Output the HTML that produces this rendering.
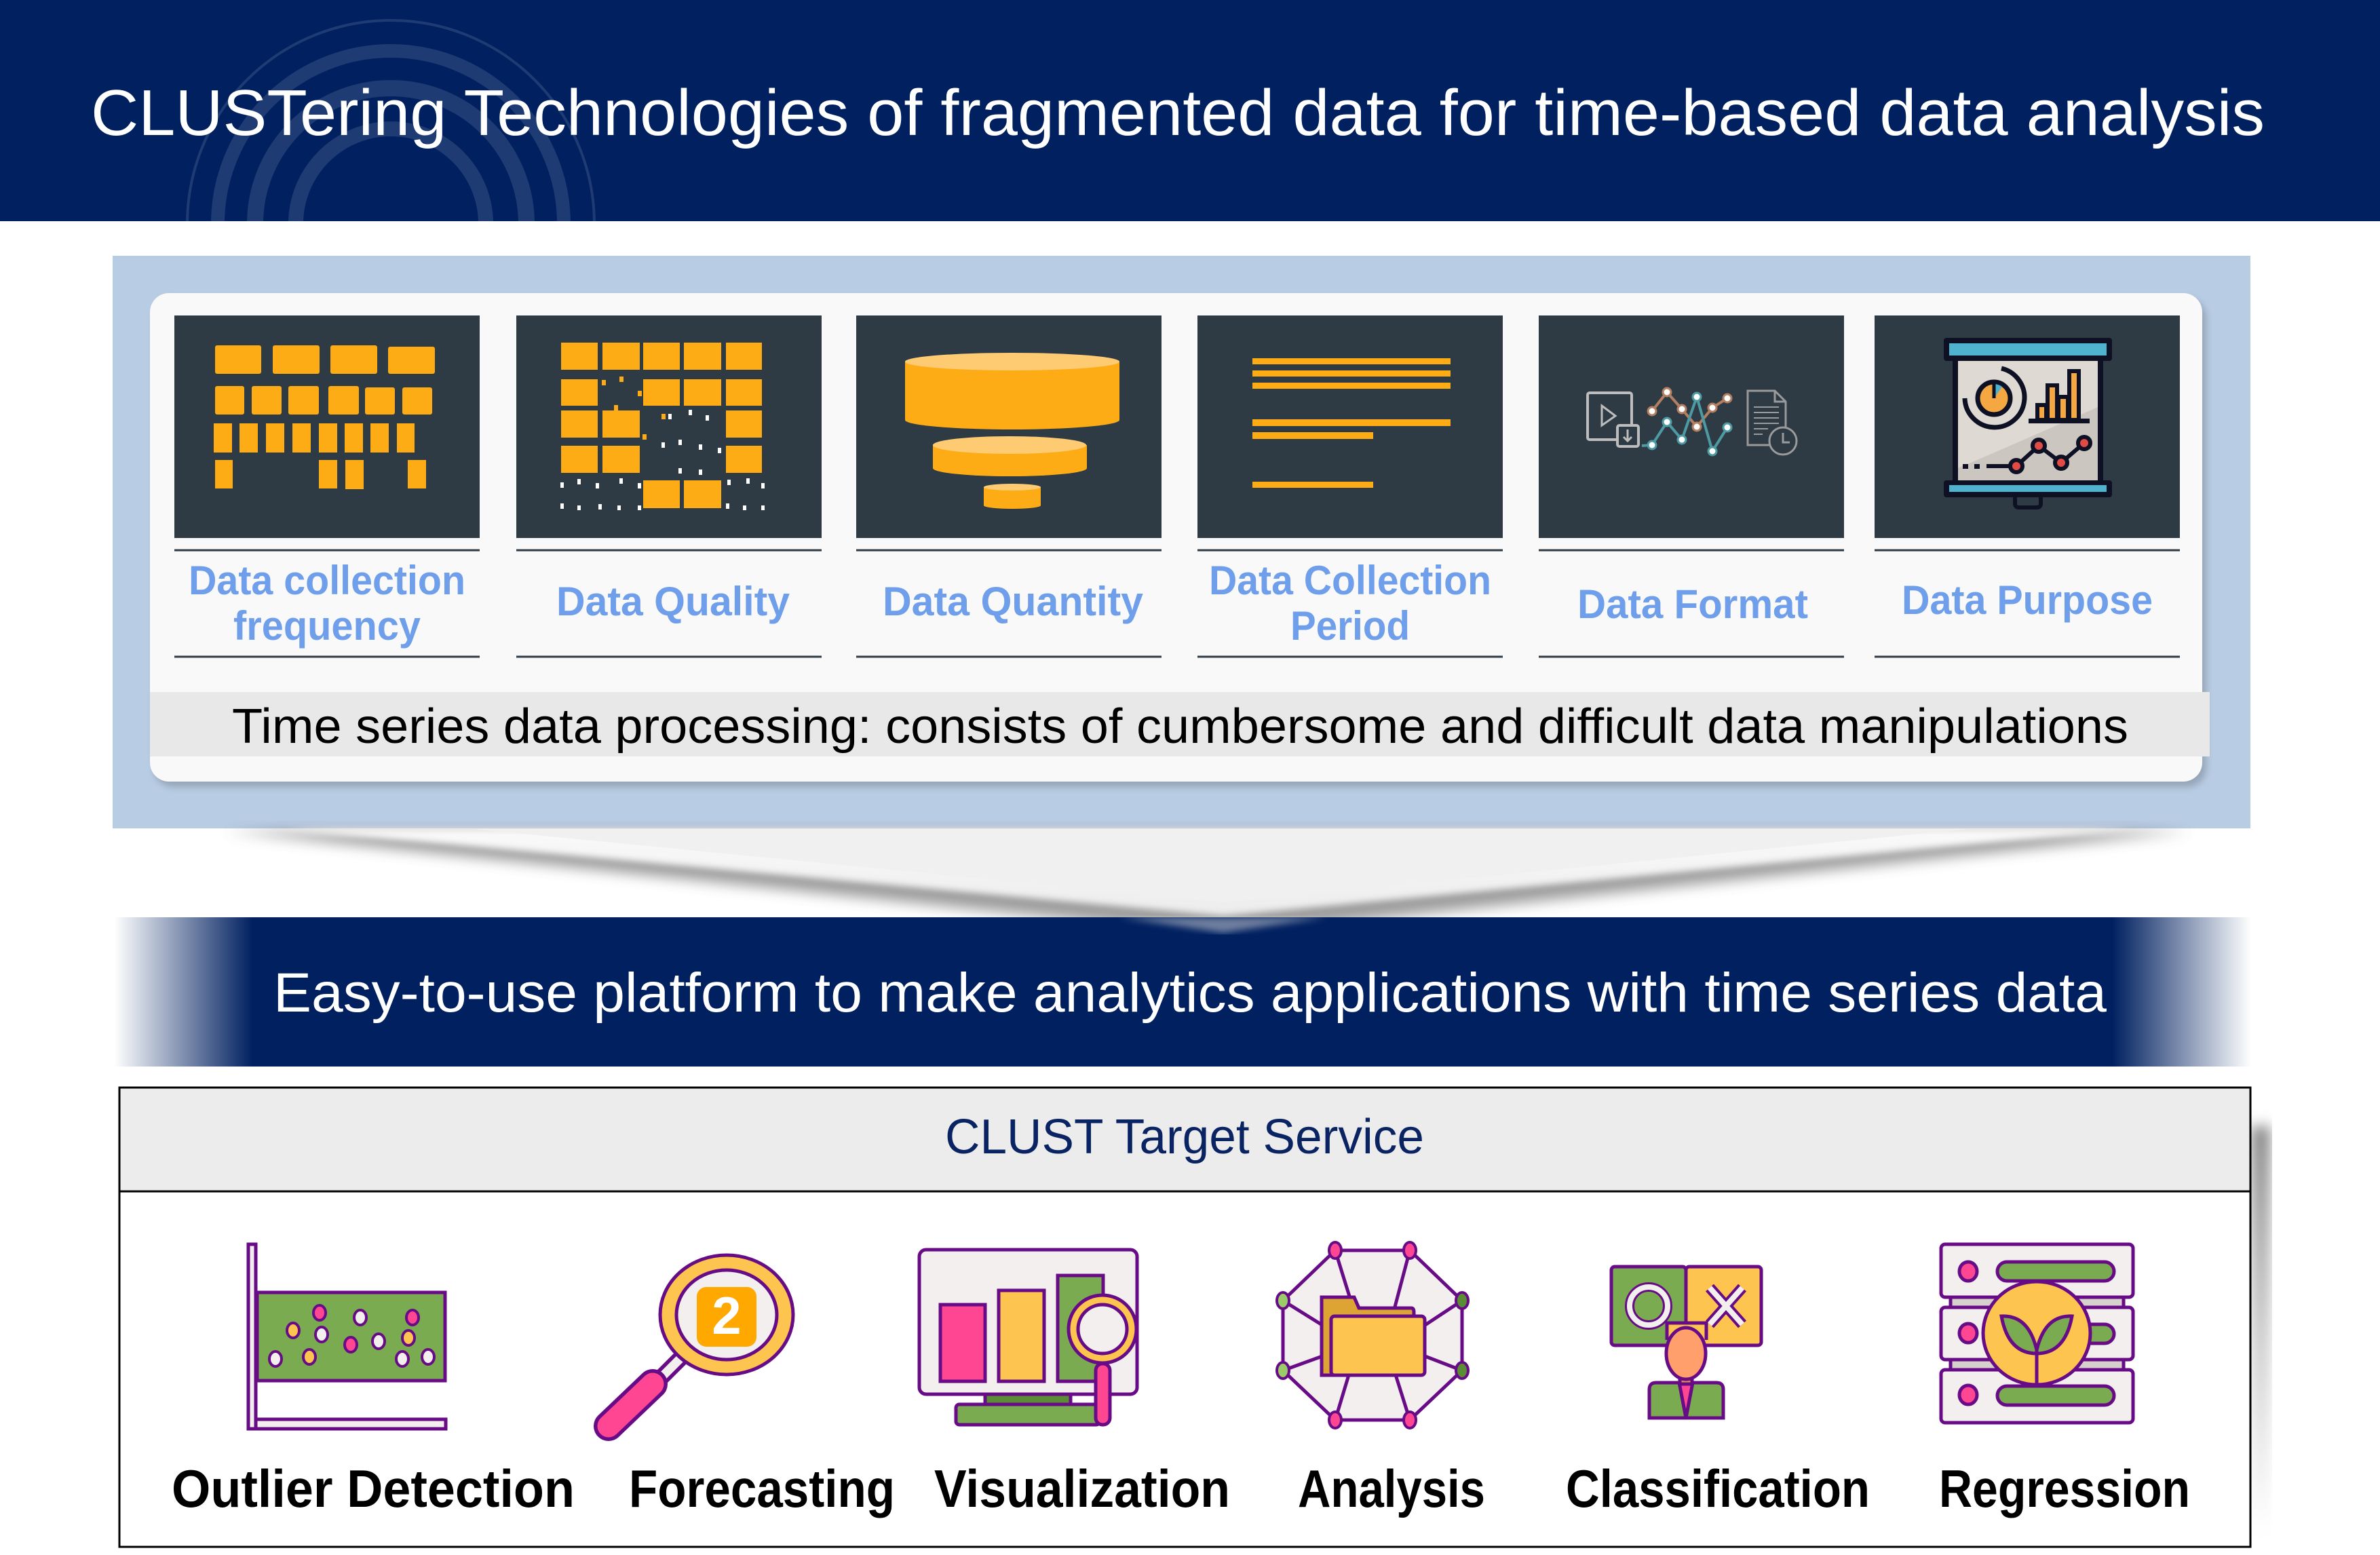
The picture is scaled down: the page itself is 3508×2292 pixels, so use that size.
<!DOCTYPE html>
<html><head><meta charset="utf-8"><style>html,body{margin:0;padding:0;background:#fff}svg{display:block}</style></head>
<body>
<svg width="3508" height="2292" viewBox="0 0 3508 2292" xmlns="http://www.w3.org/2000/svg" font-family="Liberation Sans, sans-serif">
<defs>
<linearGradient id="band" x1="0" x2="1" y1="0" y2="0">
<stop offset="0" stop-color="#002060" stop-opacity="0"/>
<stop offset="0.065" stop-color="#002060" stop-opacity="1"/>
<stop offset="0.935" stop-color="#002060" stop-opacity="1"/>
<stop offset="1" stop-color="#002060" stop-opacity="0"/>
</linearGradient>
<filter id="blur8"><feGaussianBlur stdDeviation="10"/></filter>
<filter id="blur4"><feGaussianBlur stdDeviation="5"/></filter>
<linearGradient id="vfill" x1="0" x2="0" y1="0" y2="1"><stop offset="0" stop-color="#fafafa"/><stop offset="1" stop-color="#ececec"/></linearGradient>
<linearGradient id="shR" x1="0" x2="0" y1="0" y2="1"><stop offset="0" stop-color="#777" stop-opacity="0.9"/><stop offset="1" stop-color="#999" stop-opacity="0"/></linearGradient>
</defs>

<!-- header -->
<rect x="0" y="0" width="3508" height="326" fill="#002060"/>
<g fill="none" stroke="#ffffff" stroke-opacity="0.12">
<circle cx="576" cy="330" r="300" stroke-width="4"/>
<circle cx="576" cy="330" r="255" stroke-width="20"/>
<circle cx="576" cy="330" r="200" stroke-width="24"/>
<circle cx="576" cy="330" r="140" stroke-width="22"/>
</g>
<text x="134" y="199" font-size="96" fill="#fff" textLength="3204" lengthAdjust="spacingAndGlyphs">CLUSTering Technologies of fragmented data for time-based data analysis</text>

<!-- top blue panel -->
<rect x="166" y="377" width="3151" height="844" fill="#b8cce4"/>
<rect x="227" y="440" width="3025" height="720" rx="28" fill="#7f8c99" opacity="0.6" filter="url(#blur4)"/>
<rect x="221" y="432" width="3025" height="720" rx="28" fill="#f9f9f9"/>
<rect x="221" y="1020" width="3036" height="95" fill="#e8e8e8"/>
<text x="342" y="1095" font-size="72" fill="#000" textLength="2795" lengthAdjust="spacingAndGlyphs">Time series data processing: consists of cumbersome and difficult data manipulations</text>

<!-- tiles -->
<g fill="#2e3b44">
<rect x="257" y="465" width="450" height="328"/>
<rect x="761" y="465" width="450" height="328"/>
<rect x="1262" y="465" width="450" height="328"/>
<rect x="1765" y="465" width="450" height="328"/>
<rect x="2268" y="465" width="450" height="328"/>
<rect x="2763" y="465" width="450" height="328"/>
</g>
<g stroke="#2e3b44" stroke-width="3">
<line x1="257" y1="811" x2="707" y2="811"/><line x1="257" y1="968" x2="707" y2="968"/>
<line x1="761" y1="811" x2="1211" y2="811"/><line x1="761" y1="968" x2="1211" y2="968"/>
<line x1="1262" y1="811" x2="1712" y2="811"/><line x1="1262" y1="968" x2="1712" y2="968"/>
<line x1="1765" y1="811" x2="2215" y2="811"/><line x1="1765" y1="968" x2="2215" y2="968"/>
<line x1="2268" y1="811" x2="2718" y2="811"/><line x1="2268" y1="968" x2="2718" y2="968"/>
<line x1="2763" y1="811" x2="3213" y2="811"/><line x1="2763" y1="968" x2="3213" y2="968"/>
</g>
<g fill="#6f9eea" font-weight="bold" font-size="60" text-anchor="middle">
<text x="482" y="876" textLength="408" lengthAdjust="spacingAndGlyphs">Data collection</text>
<text x="482" y="943" textLength="276" lengthAdjust="spacingAndGlyphs">frequency</text>
<text x="992" y="907" textLength="344" lengthAdjust="spacingAndGlyphs">Data Quality</text>
<text x="1493" y="907" textLength="384" lengthAdjust="spacingAndGlyphs">Data Quantity</text>
<text x="1990" y="876" textLength="416" lengthAdjust="spacingAndGlyphs">Data Collection</text>
<text x="1990" y="943" textLength="176" lengthAdjust="spacingAndGlyphs">Period</text>
<text x="2495" y="911" textLength="340" lengthAdjust="spacingAndGlyphs">Data Format</text>
<text x="2988" y="905" textLength="370" lengthAdjust="spacingAndGlyphs">Data Purpose</text>
</g>

<!-- tile1 blocks -->
<g fill="#fdac16">
<rect x="317" y="509" width="68" height="42" rx="3"/><rect x="402" y="509" width="69" height="42" rx="3"/><rect x="487" y="509" width="69" height="42" rx="3"/><rect x="572" y="511" width="69" height="40" rx="3"/>
<rect x="317" y="569" width="43" height="42" rx="3"/><rect x="371" y="569" width="44" height="42" rx="3"/><rect x="425" y="569" width="45" height="42" rx="3"/><rect x="484" y="569" width="45" height="42" rx="3"/><rect x="538" y="571" width="44" height="40" rx="3"/><rect x="593" y="571" width="44" height="40" rx="3"/>
<rect x="315" y="624" width="27" height="43"/><rect x="353" y="624" width="27" height="43"/><rect x="392" y="624" width="27" height="43"/><rect x="431" y="624" width="27" height="43"/><rect x="470" y="624" width="27" height="43"/><rect x="508" y="624" width="27" height="43"/><rect x="546" y="624" width="27" height="43"/><rect x="585" y="624" width="26" height="43"/>
<rect x="317" y="678" width="26" height="42"/><rect x="470" y="678" width="27" height="42"/><rect x="509" y="678" width="27" height="43"/><rect x="601" y="678" width="27" height="42"/>
</g>
<!-- tile2 grid -->
<g fill="#fdac16">
<rect x="827" y="505" width="54" height="40"/><rect x="888" y="505" width="55" height="40"/><rect x="948" y="505" width="54" height="40"/><rect x="1008" y="505" width="55" height="40"/><rect x="1070" y="505" width="53" height="40"/>
<rect x="827" y="559" width="54" height="39"/><rect x="948" y="559" width="54" height="39"/><rect x="1008" y="559" width="55" height="39"/><rect x="1070" y="559" width="53" height="39"/>
<rect x="827" y="605" width="54" height="40"/><rect x="888" y="605" width="55" height="40"/><rect x="1070" y="605" width="53" height="40"/>
<rect x="827" y="657" width="54" height="40"/><rect x="888" y="657" width="55" height="40"/><rect x="1070" y="657" width="53" height="40"/>
<rect x="948" y="708" width="54" height="41"/><rect x="1008" y="708" width="55" height="41"/>
<rect x="887" y="560" width="6" height="8"/><rect x="913" y="555" width="6" height="8"/><rect x="940" y="576" width="6" height="8"/><rect x="905" y="597" width="6" height="8"/><rect x="975" y="610" width="6" height="8"/><rect x="947" y="640" width="6" height="8"/>
</g>
<g fill="#fff">
<rect x="826" y="711" width="5" height="8"/><rect x="851" y="706" width="5" height="8"/><rect x="878" y="712" width="5" height="8"/><rect x="913" y="705" width="5" height="8"/><rect x="940" y="712" width="5" height="8"/><rect x="1072" y="707" width="5" height="8"/><rect x="1100" y="705" width="5" height="8"/><rect x="1122" y="712" width="5" height="8"/>
<rect x="826" y="742" width="5" height="8"/><rect x="851" y="745" width="5" height="7"/><rect x="882" y="743" width="5" height="8"/><rect x="910" y="745" width="5" height="7"/><rect x="940" y="745" width="5" height="7"/><rect x="1070" y="742" width="5" height="8"/><rect x="1095" y="745" width="5" height="7"/><rect x="1122" y="745" width="5" height="7"/>
<rect x="985" y="610" width="5" height="8"/><rect x="1015" y="604" width="5" height="8"/><rect x="1040" y="612" width="5" height="8"/><rect x="975" y="652" width="5" height="8"/><rect x="1000" y="648" width="5" height="8"/><rect x="1030" y="655" width="5" height="8"/><rect x="1058" y="660" width="5" height="8"/><rect x="1000" y="690" width="5" height="8"/><rect x="1030" y="692" width="5" height="8"/>
</g>
<!-- tile3 cylinders -->
<g>
<path d="M1334 533 V619 A158 14 0 0 0 1650 619 V533 Z" fill="#fdac16"/>
<ellipse cx="1492" cy="533" rx="158" ry="13" fill="#fecb72"/>
<path d="M1375 656 V690 A113 12 0 0 0 1602 690 V656 Z" fill="#fdac16"/>
<ellipse cx="1488" cy="656" rx="113" ry="13" fill="#fecb72"/>
<path d="M1450 718 V745 A42 5 0 0 0 1534 745 V718 Z" fill="#fdac16"/>
<ellipse cx="1492" cy="718" rx="42" ry="5" fill="#fecb72"/>
</g>
<!-- tile4 lines -->
<g fill="#fdac16">
<rect x="1846" y="528" width="292" height="9"/><rect x="1846" y="546" width="292" height="9"/><rect x="1846" y="564" width="292" height="9"/>
<rect x="1846" y="618" width="292" height="10"/><rect x="1846" y="637" width="178" height="10"/><rect x="1846" y="710" width="178" height="9"/>
</g>
<!-- tile5 data format -->
<g fill="none" stroke="#bdbdbd" stroke-width="4">
<rect x="2340" y="579" width="65" height="69" rx="3"/>
<rect x="2384" y="627" width="31" height="31" rx="3" fill="#2e3b44"/>
<path d="M2361 598 L2381 613 L2361 627 Z" stroke-width="3"/>
<path d="M2399 633 V650 M2393 644 L2399 650 L2405 644" stroke-width="3"/>
<path d="M2576 576 H2616 L2632 592 V656 H2576 Z" stroke="#9a9a9a" stroke-width="3"/>
<path d="M2616 576 V592 H2632" stroke="#9a9a9a" stroke-width="3"/>
<path d="M2585 600 H2622 M2585 608 H2622 M2585 616 H2622 M2585 624 H2622 M2585 632 H2606 M2585 640 H2598" stroke="#9a9a9a" stroke-width="2"/>
<circle cx="2628" cy="650" r="20" fill="#2e3b44" stroke="#9a9a9a" stroke-width="3"/>
<path d="M2628 638 V652 H2638" stroke="#9a9a9a" stroke-width="3"/>
</g>
<polyline points="2435,606 2457,578 2479,603 2501,629 2524,601 2546,587" fill="none" stroke="#b47e61" stroke-width="4"/>
<polyline points="2420,657 2435,656 2457,622 2479,648 2501,585 2524,665 2546,630" fill="none" stroke="#4d9aa3" stroke-width="4"/>
<g fill="#fff" stroke-width="3">
<g stroke="#b47e61"><circle cx="2435" cy="606" r="6"/><circle cx="2457" cy="578" r="6"/><circle cx="2479" cy="603" r="6"/><circle cx="2501" cy="629" r="6"/><circle cx="2524" cy="601" r="6"/><circle cx="2546" cy="587" r="6"/></g>
<g stroke="#4d9aa3"><circle cx="2435" cy="656" r="6"/><circle cx="2457" cy="622" r="6"/><circle cx="2479" cy="648" r="6"/><circle cx="2501" cy="585" r="6"/><circle cx="2524" cy="665" r="6"/><circle cx="2546" cy="630" r="6"/></g>
</g>
<!-- tile6 presentation -->
<g>
<rect x="2878" y="530" width="222" height="182" fill="#0e1024"/>
<rect x="2886" y="532" width="206" height="176" fill="#ded9d2"/>
<path d="M2886 690 Q2980 650 3092 600 V708 H2886 Z" fill="#cbc6bf"/>
<rect x="2865" y="498" width="248" height="34" rx="4" fill="#0e1024"/>
<rect x="2873" y="506" width="232" height="18" fill="#4fb3cf"/>
<rect x="2865" y="708" width="248" height="25" rx="4" fill="#0e1024"/>
<rect x="2873" y="715" width="232" height="10" fill="#4fb3cf"/>
<path d="M2970 733 V742 Q2970 748 2976 748 H3002 Q3008 748 3008 742 V733" fill="none" stroke="#0e1024" stroke-width="6"/>
<circle cx="2939" cy="587" r="24" fill="#f5a742" stroke="#0e1024" stroke-width="7"/>
<path d="M2939 587 L2939 566 A21 21 0 0 1 2951 570 Z" fill="#4fb3cf"/>
<line x1="2939" y1="587" x2="2939" y2="565" stroke="#0e1024" stroke-width="5"/>
<path d="M2950 543 A44 44 0 1 1 2896 587" fill="none" stroke="#0e1024" stroke-width="7"/>
<rect x="2990" y="617" width="90" height="7" fill="#0e1024"/>
<g fill="#f5a742" stroke="#0e1024" stroke-width="6"><rect x="3003" y="597" width="13" height="22"/><rect x="3018" y="568" width="14" height="51"/><rect x="3034" y="585" width="14" height="34"/><rect x="3050" y="547" width="14" height="72"/></g>
<polyline points="2928,687 2972,687 3005,657 3038,682 3072,653" fill="none" stroke="#0e1024" stroke-width="6"/>
<rect x="2893" y="684" width="8" height="7" fill="#0e1024"/><rect x="2910" y="684" width="8" height="7" fill="#0e1024"/>
<g fill="#e04b45" stroke="#0e1024" stroke-width="6"><circle cx="2972" cy="687" r="9"/><circle cx="3005" cy="657" r="9"/><circle cx="3038" cy="682" r="9"/><circle cx="3072" cy="653" r="9"/></g>
</g>

<!-- funnel V -->
<polygon points="330,1225 3230,1225 1803,1378" fill="#8a8a8a" opacity="0.85" filter="url(#blur8)"/>
<polygon points="420,1222 3140,1222 1803,1350" fill="url(#vfill)" filter="url(#blur4)"/>
<polygon points="700,1222 2900,1222 1803,1330" fill="#f0f0f0"/>

<!-- band -->
<rect x="168" y="1352" width="3150" height="220" fill="url(#band)"/>
<polygon points="1650,1352 1956,1352 1803,1375" fill="#dcdcdc" opacity="0.5" filter="url(#blur4)"/>
<text x="403" y="1491" font-size="82" fill="#fff" textLength="2702" lengthAdjust="spacingAndGlyphs">Easy-to-use platform to make analytics applications with time series data</text>

<!-- bottom box -->
<rect x="3318" y="1660" width="28" height="600" fill="url(#shR)" filter="url(#blur8)"/>
<rect x="176" y="1603" width="3141" height="677" fill="#fff" stroke="#000" stroke-width="3"/>
<rect x="177.5" y="1604.5" width="3138" height="151" fill="#ececec"/>
<line x1="176" y1="1756" x2="3317" y2="1756" stroke="#000" stroke-width="3"/>
<text x="1746" y="1700" font-size="72" fill="#0a2463" text-anchor="middle" textLength="706" lengthAdjust="spacingAndGlyphs">CLUST Target Service</text>

<g font-weight="bold" font-size="78" fill="#000" text-anchor="middle">
<text x="550" y="2221" textLength="594" lengthAdjust="spacingAndGlyphs">Outlier Detection</text>
<text x="1123" y="2221" textLength="392" lengthAdjust="spacingAndGlyphs">Forecasting</text>
<text x="1595" y="2221" textLength="436" lengthAdjust="spacingAndGlyphs">Visualization</text>
<text x="2051" y="2221" textLength="276" lengthAdjust="spacingAndGlyphs">Analysis</text>
<text x="2532" y="2221" textLength="448" lengthAdjust="spacingAndGlyphs">Classification</text>
<text x="3043" y="2221" textLength="370" lengthAdjust="spacingAndGlyphs">Regression</text>
</g>

<!-- icon: outlier -->
<g stroke="#680b86" stroke-width="5">
<rect x="366" y="1834" width="11" height="272" fill="#f3efee"/>
<rect x="377" y="2092" width="280" height="14" fill="#f3efee"/>
<rect x="379" y="1905" width="277" height="130" fill="#7bab50"/>
<g stroke-width="4">
<ellipse cx="471" cy="1935" rx="9" ry="11" fill="#fe4693"/><ellipse cx="531" cy="1942" rx="9" ry="11" fill="#f3efee"/><ellipse cx="608" cy="1942" rx="9" ry="11" fill="#fe4693"/>
<ellipse cx="432" cy="1961" rx="9" ry="11" fill="#fdc44f"/><ellipse cx="474" cy="1967" rx="9" ry="11" fill="#f3efee"/><ellipse cx="517" cy="1982" rx="9" ry="11" fill="#fe4693"/>
<ellipse cx="558" cy="1977" rx="9" ry="11" fill="#f3efee"/><ellipse cx="602" cy="1972" rx="9" ry="11" fill="#fdc44f"/><ellipse cx="406" cy="2003" rx="9" ry="11" fill="#f3efee"/>
<ellipse cx="456" cy="2000" rx="9" ry="11" fill="#fdc44f"/><ellipse cx="593" cy="2003" rx="9" ry="11" fill="#f3efee"/><ellipse cx="631" cy="2000" rx="9" ry="11" fill="#f3efee"/>
</g>
</g>
<!-- icon: forecasting -->
<g stroke="#680b86" stroke-width="5">
<line x1="1010" y1="1995" x2="965" y2="2040" stroke="#680b86" stroke-width="24"/>
<line x1="1010" y1="1995" x2="965" y2="2040" stroke="#f3efee" stroke-width="13"/>
<line x1="962" y1="2040" x2="897" y2="2102" stroke="#680b86" stroke-width="44" stroke-linecap="round"/>
<line x1="962" y1="2040" x2="897" y2="2102" stroke="#fe4693" stroke-width="33" stroke-linecap="round"/>
<ellipse cx="1071" cy="1938" rx="98" ry="88" fill="#fdc44f"/>
<ellipse cx="1071" cy="1938" rx="74" ry="66" fill="#f3efee"/>
<rect x="1027" y="1897" width="88" height="88" rx="14" fill="#fea800" stroke="none"/>
<text x="1071" y="1966" font-size="78" font-weight="bold" fill="#fff" stroke="none" text-anchor="middle">2</text>
</g>
<!-- icon: visualization -->
<g stroke="#680b86" stroke-width="5">
<rect x="1452" y="2055" width="126" height="15" fill="#5b8e34"/>
<rect x="1409" y="2070" width="212" height="30" rx="5" fill="#7bab50"/>
<rect x="1355" y="1842" width="321" height="213" rx="10" fill="#f3efee"/>
<rect x="1386" y="1923" width="66" height="113" fill="#fe4693"/>
<rect x="1472" y="1902" width="67" height="134" fill="#fdc44f"/>
<rect x="1559" y="1880" width="67" height="156" fill="#7bab50"/>
<rect x="1615" y="2010" width="21" height="90" rx="10" fill="#fe4693"/>
<circle cx="1625" cy="1959" r="50" fill="#fdc44f"/>
<circle cx="1625" cy="1959" r="36" fill="#f3efee"/>
</g>
<!-- icon: analysis -->
<g stroke="#680b86" stroke-width="5">
<polygon points="1968,1843 2078,1843 2155,1917 2155,2020 2078,2093 1968,2093 1891,2020 1891,1917" fill="#f3efee"/>
<path d="M1968,1843 L1995,1930 M2078,1843 L2055,1930 M1891,1917 L1960,1960 M2155,1917 L2090,1960 M1891,2020 L1960,1995 M2155,2020 L2090,1995 M1968,2093 L1990,2020 M2078,2093 L2055,2020" fill="none"/>
<path d="M1948 1912 H1996 L2003 1928 H2080 Q2084 1928 2084 1934 V2027 H1948 Z" fill="#dea433"/>
<rect x="1962" y="1940" width="138" height="87" rx="5" fill="#fdc44f"/>
<g stroke-width="4"><ellipse cx="1968" cy="1843" rx="9" ry="12" fill="#fe4693"/><ellipse cx="2078" cy="1843" rx="9" ry="12" fill="#fe4693"/><ellipse cx="1891" cy="1917" rx="9" ry="12" fill="#9ccb6a"/><ellipse cx="2155" cy="1917" rx="9" ry="12" fill="#5b8e34"/><ellipse cx="1891" cy="2020" rx="9" ry="12" fill="#9ccb6a"/><ellipse cx="2155" cy="2020" rx="9" ry="12" fill="#5b8e34"/><ellipse cx="1968" cy="2093" rx="9" ry="12" fill="#fe4693"/><ellipse cx="2078" cy="2093" rx="9" ry="12" fill="#fe4693"/></g>
</g>
<!-- icon: classification -->
<g stroke="#680b86" stroke-width="5">
<rect x="2375" y="1867" width="110" height="116" rx="5" fill="#7bab50"/>
<rect x="2485" y="1867" width="111" height="116" rx="5" fill="#fdc44f"/>
<ellipse cx="2430" cy="1925" rx="28" ry="28" fill="none" stroke="#680b86" stroke-width="14"/>
<ellipse cx="2430" cy="1925" rx="28" ry="28" fill="none" stroke="#f3efee" stroke-width="8"/>
<path d="M2520 1898 L2568 1952 M2568 1898 L2520 1952" stroke="#680b86" stroke-width="16"/>
<path d="M2520 1898 L2568 1952 M2568 1898 L2520 1952" stroke="#f3efee" stroke-width="8"/>
<path d="M2431 2090 V2048 Q2431 2038 2441 2038 H2530 Q2540 2038 2540 2048 V2090 Z" fill="#7bab50"/>
<path d="M2475 2038 L2485 2090 L2495 2038" fill="#fe4693"/>
<rect x="2476" y="2025" width="18" height="15" fill="#e08a4a"/>
<path d="M2457 1975 V1950 H2515 V1975" fill="#fdc44f"/>
<ellipse cx="2485" cy="1995" rx="29" ry="38" fill="#ffa06c"/>
</g>
<!-- icon: regression -->
<g stroke="#680b86" stroke-width="5">
<rect x="2875" y="1912" width="255" height="16" fill="#d6d1cd"/>
<rect x="2875" y="2003" width="255" height="16" fill="#d6d1cd"/>
<rect x="2861" y="1834" width="283" height="78" rx="6" fill="#f3efee"/>
<rect x="2861" y="1927" width="283" height="77" rx="6" fill="#f3efee"/>
<rect x="2861" y="2019" width="283" height="78" rx="6" fill="#f3efee"/>
<ellipse cx="2901" cy="1874" rx="13" ry="14" fill="#fe4693"/><ellipse cx="2901" cy="1965" rx="13" ry="14" fill="#fe4693"/><ellipse cx="2901" cy="2056" rx="13" ry="14" fill="#fe4693"/>
<rect x="2944" y="1860" width="172" height="28" rx="14" fill="#7bab50"/>
<rect x="3040" y="1952" width="76" height="28" rx="14" fill="#7bab50"/>
<rect x="2944" y="2043" width="172" height="28" rx="14" fill="#7bab50"/>
<ellipse cx="3002" cy="1965" rx="79" ry="76" fill="#fdc44f"/>
<path d="M3002 2041 V1995" fill="none"/>
<path d="M3002 1995 Q2960 1995 2950 1940 Q2990 1938 3002 1990 Z" fill="#7bab50"/>
<path d="M3002 1995 Q3044 1995 3054 1940 Q3014 1938 3002 1990 Z" fill="#7bab50"/>
</g>
</svg>
</body></html>
